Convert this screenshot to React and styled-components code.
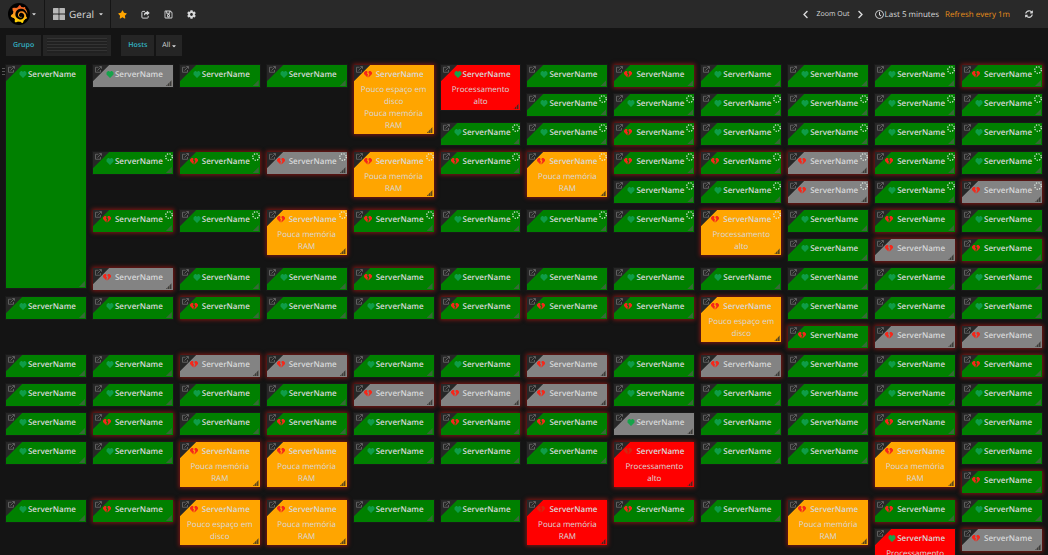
import React from "react";
import styled, { createGlobalStyle } from "styled-components";
import {
  FaStar, FaRegSave, FaCog, FaChevronLeft, FaChevronRight, FaRegClock, FaSyncAlt, FaCaretDown,
} from "react-icons/fa";
import { SiGrafana } from "react-icons/si";

const GlobalStyle = createGlobalStyle`
  * { box-sizing: border-box; }
  body {
    margin: 0;
    background: #141414;
    color: #d8d9da;
    font-family: "Open Sans", "Noto Sans", sans-serif;
    font-size: 8px;
    text-rendering: geometricPrecision;
  }
  button, select {
    font: inherit; color: inherit; text-rendering: inherit;
    border: 0; background: none; padding: 0; margin: 0; cursor: pointer;
  }
`;

const Page = styled.div`
  height: 100vh;
  overflow: hidden;
`;

const TopBar = styled.header`
  display: flex;
  align-items: stretch;
  height: 28px;
  background: #292929;
`;

const HomeButton = styled.button`
  display: flex;
  align-items: center;
  gap: 1px;
  padding: 0 7px 0 8px;
  border-right: 1px solid #151515;
`;

const LogoDisc = styled.span`
  display: grid;
  place-items: center;
  width: 22px;
  height: 22px;
  border-radius: 50%;
  background: #000;
`;

const TitleButton = styled.button`
  display: flex;
  align-items: center;
  gap: 4px;
  padding: 0 6px 0 8px;
  border-right: 1px solid #151515;
  font-size: 10px;
`;

const Tools = styled.nav`
  display: flex;
  align-items: center;
  gap: 13px;
  padding-left: 6px;
`;

const IconButton = styled.button`
  display: grid;
  place-items: center;
  width: 10px;
  height: 20px;
  color: ${(p) => (p.$tone === "star" ? "#ffa500" : "#d8d9da")};
`;

const TimeControls = styled.div`
  display: flex;
  align-items: center;
  margin-left: auto;
  padding-right: 14px;
`;

const ZoomButton = styled.button`
  font-size: 7px;
  padding: 0 6px;
`;

const RangeButton = styled.button`
  display: flex;
  align-items: center;
  gap: 1px;
  padding: 0 6px 0 9px;
`;

const RefreshLabel = styled.span`
  color: #e88f1a;
  padding-right: 14px;
`;

const Filters = styled.div`
  display: flex;
  gap: 2px;
  padding: 7px 6px 8px;
  font-size: 7px;
`;

const FilterLabel = styled.label`
  display: flex;
  align-items: center;
  height: 21px;
  padding: 0 7px;
  background: #252525;
  color: #33b5c5;
  font-weight: 600;
  margin-left: ${(p) => (p.$separate ? "8px" : "0")};
`;

const FilterField = styled.span`
  position: relative;
  display: flex;
  align-items: center;
  height: 21px;
  width: ${(p) => (p.$wide ? "68px" : "26px")};
  background: #252525;
`;

const FilterSelect = styled.select`
  appearance: none;
  width: 100%;
  height: 21px;
  padding-left: 6px;
`;

const SelectCaret = styled(FaCaretDown)`
  position: absolute;
  right: 5px;
  pointer-events: none;
`;

const Stripes = styled.span`
  position: absolute;
  inset: 3px 4px;
  pointer-events: none;
  background: repeating-linear-gradient(#333 0 1px, #212121 1px 3px);
`;

const Board = styled.main`
  position: relative;
  display: grid;
  grid-template-columns: repeat(12, minmax(0, 1fr));
  grid-auto-rows: 22px;
  gap: 7px;
  align-items: start;
  padding: 1px 6px 0;
`;

const RowHandle = styled.span`
  position: absolute;
  left: 2px;
  top: 4px;
  width: 3px;
  height: 9px;
  background: repeating-linear-gradient(#555 0 1px, transparent 1px 3px);
`;

const FILLS = { g: "#008000", x: "#838383", o: "#ffa500", r: "#ff0000" };

const Card = styled.section`
  position: relative;
  grid-column: ${(p) => p.$col};
  grid-row: ${(p) => p.$row} / span ${(p) => p.$span};
  min-height: ${(p) => (p.$tall ? "223px" : "22px")};
  padding-bottom: 2px;
  background:
    linear-gradient(135deg, #272727 11px, transparent 12px),
    ${(p) => FILLS[p.$status]};
  box-shadow: ${(p) =>
    p.$alerting ? "0 0 4px 1px rgba(205, 25, 20, 0.6)" : "0 0 0 1px #191919"};
  text-align: center;
`;

const CardLink = styled.a`
  position: absolute;
  left: 2px;
  top: 1px;
  width: 7px;
  height: 7px;
  color: #6c6c6c;
  svg { display: block; }
`;

const CardHeader = styled.h2`
  display: flex;
  align-items: center;
  justify-content: center;
  margin: 0 0 1px;
  height: 18px;
  font-size: 8px;
  font-weight: 600;
`;

const HeartSlot = styled.span`
  display: flex;
  width: 12px;
  flex: none;
  justify-content: ${(p) => (p.$broken ? "flex-start" : "flex-end")};
  padding-right: ${(p) => (p.$broken ? "0" : "1px")};
`;

const Message = styled.p`
  margin: 0 6px;
  line-height: 12px;
`;

const Spinner = styled.span`
  position: absolute;
  top: 1px;
  right: 0;
  width: 8px;
  height: 8px;
  svg { display: block; }
`;

const ResizeGrip = styled.span`
  position: absolute;
  right: 1px;
  bottom: 1px;
  width: 6px;
  height: 6px;
  clip-path: polygon(100% 0, 100% 100%, 0 100%);
  background: ${(p) =>
    p.$status === "g"
      ? "rgba(90, 90, 90, 0.6)"
      : "repeating-linear-gradient(90deg, rgba(30,30,30,.7) 0 1px, rgba(70,65,55,.6) 1px 2px)"};
`;

const MESSAGES = {
  disk: "Pouco espaço em disco",
  ram: "Pouca memória RAM",
  cpu: "Processamento alto",
};

// One line per grid row, one word per column. Letter: g green, x grey, o orange,
// r red (capital when alerting). "*" is loading, "." is an empty cell.
const LAYOUT = [
  "g x g g O:disk+ram r:cpu g G g g g* G*",
  ". . . . . . g* g* g* g* g* g*",
  ". . . . . g* g* G* g* g* g* g*",
  ". g* G* X* O*:ram G* O*:ram G* G* X* G* g*",
  ". . . . . . . g* g* X* g* X*",
  ". G* g* O*:ram G* g* g* g* O*:cpu g G g",
  ". . . . . . . . . g X G",
  ". X g g G g g g g g g g",
  "g g G g g G G G O:disk g g g",
  ". . . . . . . . . G X X",
  "g g X X g g X g X g g G",
  "g g g g X X X g g g g g",
  "g G g G g G G x g g G g",
  "g g O:ram O:ram g g g R:cpu g g O:ram g",
  ". . . . . . . . . . . G",
  "g G O:disk O:ram g g R:ram G g O:ram G g",
  ". . . . . . . . . . r:cpu X",
];

const CARDS = LAYOUT.flatMap((line, row) =>
  line.split(" ").flatMap((word, col) => {
    if (word === ".") return [];
    const [state, list] = word.split(":");
    const letter = state[0];
    const status = letter.toLowerCase();
    const messages = list ? list.split("+") : [];
    const tall = row === 0 && col === 0;
    return [{
      row: row + 1,
      col: col + 1,
      status,
      alerting: letter !== status,
      loading: state.includes("*"),
      messages,
      tall,
      span: tall ? 8 : messages.length + 1,
    }];
  })
);

function Heart({ status }) {
  return (
    <svg width="8" height="7" viewBox="0 0 16 14" aria-hidden="true">
      <path d="M8 14 1 7V3l3-3h2l2 2 2-2h2l3 3v4z" fill={status === "g" ? "#0f9d48" : "#16a34a"} />
    </svg>
  );
}

function BrokenHeart({ status }) {
  return (
    <svg width="8" height="7" viewBox="0 0 16 14" aria-hidden="true" opacity={status === "r" ? 0.6 : 1}>
      <path d="M7 13 0 6V3l3-3h3l1 2-1 3 2 2-1 3zM9 13l7-7V3l-3-3h-3L9 2v2l2 2-2 4z" fill={status === "r" ? "#b8421c" : "#f5271a"} />
    </svg>
  );
}

function ExternalLink() {
  return (
    <svg width="7" height="7" viewBox="0 0 14 14" fill="none" stroke="currentColor" strokeWidth="1.6" aria-hidden="true">
      <path d="M7 2.5H1v10h10V8M5 9l7-7M8.500 1H13v4.500" />
    </svg>
  );
}

function ShareIcon() {
  return (
    <svg width="9" height="9" viewBox="0 0 20 20" fill="none" aria-hidden="true">
      <path d="M9 3H4Q2 3 2 5v11q0 2 2 2h10q2 0 2-2v-3" stroke="currentColor" strokeWidth="2.200" />
      <path d="M13 1l6.500 5.500L13 12V9q-5 0-6 4-2-8 6-9z" fill="currentColor" />
    </svg>
  );
}

function GridIcon() {
  return (
    <svg width="12" height="12" viewBox="0 0 12 12" fill="#b8b8b8" aria-hidden="true">
      <rect width="5.600" height="5.600" rx=".6" />
      <rect x="6.400" width="5.600" height="5.600" rx=".6" />
      <rect y="6.400" width="5.600" height="5.600" rx=".6" />
      <rect x="6.400" y="6.400" width="5.600" height="5.600" rx=".6" />
    </svg>
  );
}

const FlameDefs = styled.svg`
  position: absolute;
`;

const FlameLogo = styled(SiGrafana)`
  fill: url(#flame);
`;

function Logo() {
  return (
    <LogoDisc>
      <FlameDefs width="0" height="0" aria-hidden="true">
        <linearGradient id="flame" x1="0" y1="1" x2="0" y2="0">
          <stop offset="0" stopColor="#ffe000" />
          <stop offset=".5" stopColor="#fb9a1d" />
          <stop offset="1" stopColor="#f04e28" />
        </linearGradient>
      </FlameDefs>
      <FlameLogo size={18} />
    </LogoDisc>
  );
}

function ServerCard({ row, col, status, alerting, loading, messages, tall, span }) {
  return (
    <Card $row={row} $col={col} $span={span} $status={status} $alerting={alerting} $tall={tall}>
      <CardLink href="#server" aria-label="Open server"><ExternalLink /></CardLink>
      <CardHeader>
        <HeartSlot $broken={alerting}>
          {alerting ? <BrokenHeart status={status} /> : <Heart status={status} />}
        </HeartSlot>
        ServerName
      </CardHeader>
      {messages.map((m) => <Message key={m}>{MESSAGES[m]}</Message>)}
      {loading && (
        <Spinner>
          <svg width="8" height="8" viewBox="0 0 8 8" aria-hidden="true">
            <circle cx="4" cy="4" r="3.300" fill="none" stroke="#e4eee4" strokeWidth="1.200" strokeDasharray="1.300 1.300" />
          </svg>
        </Spinner>
      )}
      <ResizeGrip $status={status} />
    </Card>
  );
}

export default function App() {
  return (
    <Page>
      <GlobalStyle />
      <TopBar>
        <HomeButton aria-label="Main menu"><Logo /><FaCaretDown size={6} /></HomeButton>
        <TitleButton><GridIcon />Geral<FaCaretDown size={6} /></TitleButton>
        <Tools>
          <IconButton $tone="star" aria-label="Star"><FaStar size={9} /></IconButton>
          <IconButton aria-label="Share"><ShareIcon /></IconButton>
          <IconButton aria-label="Save"><FaRegSave size={9} /></IconButton>
          <IconButton aria-label="Settings"><FaCog size={9} /></IconButton>
        </Tools>
        <TimeControls>
          <IconButton aria-label="Back"><FaChevronLeft size={9} /></IconButton>
          <ZoomButton>Zoom Out</ZoomButton>
          <IconButton aria-label="Forward"><FaChevronRight size={9} /></IconButton>
          <RangeButton><FaRegClock size={9} />Last 5 minutes</RangeButton>
          <RefreshLabel>Refresh every 1m</RefreshLabel>
          <IconButton aria-label="Refresh"><FaSyncAlt size={8} /></IconButton>
        </TimeControls>
      </TopBar>
      <Filters>
        <FilterLabel htmlFor="grupo">Grupo</FilterLabel>
        <FilterField $wide>
          <FilterSelect id="grupo"><option value="" aria-label="Grupo" /></FilterSelect>
          <Stripes />
        </FilterField>
        <FilterLabel htmlFor="hosts" $separate>Hosts</FilterLabel>
        <FilterField>
          <FilterSelect id="hosts"><option>All</option></FilterSelect>
          <SelectCaret size={6} />
        </FilterField>
      </Filters>
      <Board>
        <RowHandle />
        {CARDS.map((c) => <ServerCard key={`${c.row}-${c.col}`} {...c} />)}
      </Board>
    </Page>
  );
}
